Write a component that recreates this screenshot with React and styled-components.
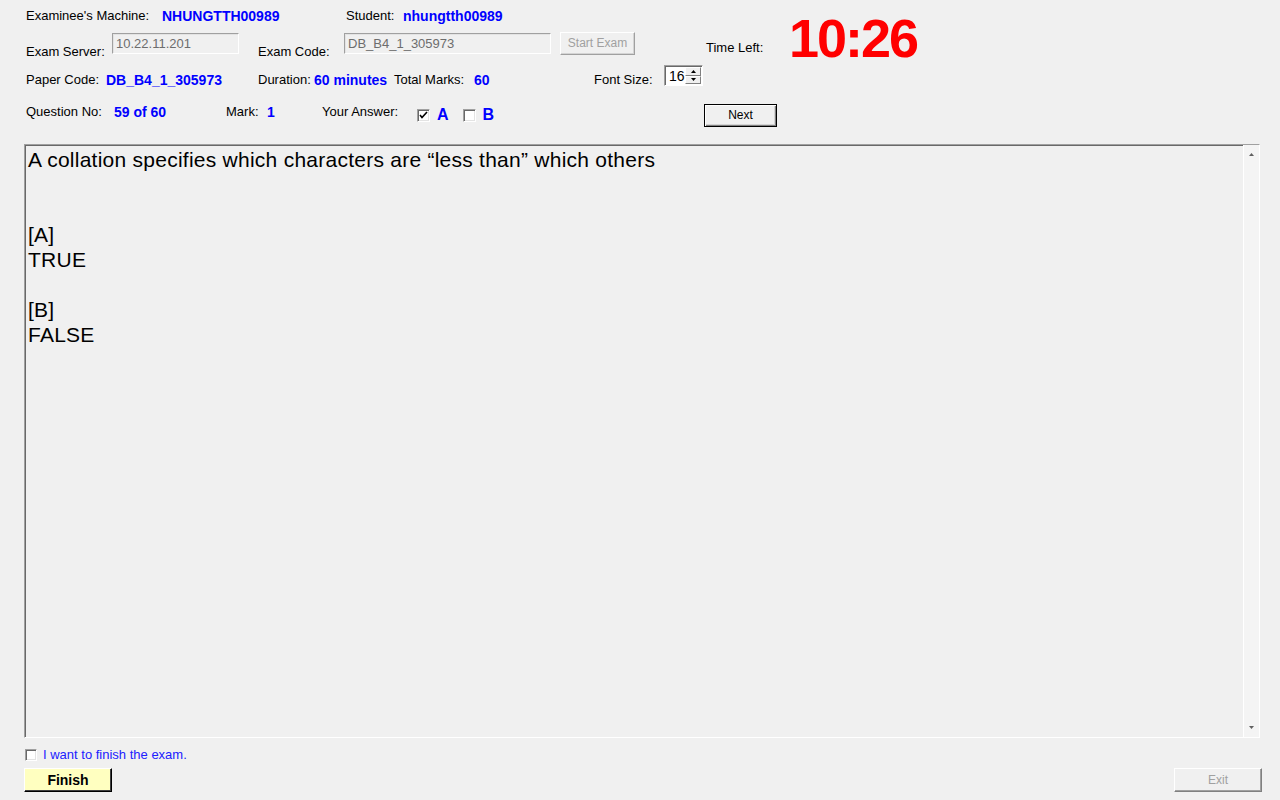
import React from 'react';
import styled, { createGlobalStyle } from 'styled-components';

const GlobalStyle = createGlobalStyle`
  body {
    margin: 0;
    background: #f0f0f0;
    font-family: "Liberation Sans", Arial, sans-serif;
    font-size: 13px;
    color: #000;
  }
`;

const Page = styled.div`
  width: 1280px;
  height: 800px;
  display: flex;
  flex-direction: column;
  background: #f0f0f0;
  overflow: hidden;
`;

const Header = styled.div`
  display: flex;
  padding-left: 26px;
  height: 128px;
`;

const LeftCol = styled.div`
  display: flex;
  flex-direction: column;
  flex: none;
  width: 680px;
`;

const Row = styled.div`
  display: flex;
  align-items: center;
  height: 32px;
`;

const Label = styled.span`
  flex: none;
  width: ${(p) => p.$w}px;
  font-size: 13px;
  line-height: 16px;
  white-space: nowrap;
  margin-top: ${(p) => p.$top || 0}px;
`;

const Value = styled.span`
  flex: none;
  width: ${(p) => (p.$w ? `${p.$w}px` : 'auto')};
  font-size: 14px;
  font-weight: bold;
  color: #0000ff;
  line-height: 16px;
  white-space: nowrap;
`;

const TextBox = styled.div`
  flex: none;
  align-self: flex-start;
  margin-top: 1px;
  margin-right: ${(p) => p.$mr}px;
  width: ${(p) => p.$w}px;
  height: 21px;
  box-sizing: border-box;
  border: 1px solid;
  border-color: #a0a0a0 #fff #fff #a0a0a0;
  box-shadow: inset 1px 1px 0 #e3e3e3;
  padding: 0 3px;
  font-size: 13px;
  line-height: 19px;
  color: #6d6d6d;
  white-space: nowrap;
`;

const DisabledButton = styled.div`
  flex: none;
  align-self: flex-start;
  width: ${(p) => p.$w}px;
  height: 23px;
  box-sizing: border-box;
  border: 1px solid;
  border-color: #fff #a0a0a0 #a0a0a0 #fff;
  box-shadow: inset -1px -1px 0 #d4d4d4;
  font-size: 12px;
  line-height: 21px;
  text-align: center;
  color: #a0a0a0;
`;

const TimeBlock = styled.div`
  display: flex;
  align-items: flex-start;
  height: 64px;
`;

const Timer = styled.div`
  margin-top: 11px;
  font-size: 54px;
  line-height: 54px;
  letter-spacing: -2px;
  font-weight: bold;
  color: #ff0000;
`;

const Spinner = styled.div`
  flex: none;
  align-self: flex-start;
  margin-top: 1px;
  width: 39px;
  height: 21px;
  box-sizing: border-box;
  display: flex;
  background: #fff;
  border: 1px solid;
  border-color: #a0a0a0 #fff #fff #a0a0a0;
  box-shadow: inset 1px 1px 0 #696969;
`;

const SpinValue = styled.span`
  flex: 1;
  padding-left: 4px;
  font-size: 14px;
  line-height: 20px;
`;

const SpinButtons = styled.div`
  display: flex;
  flex-direction: column;
  width: 16px;
  margin: 1px 1px 1px 0;
`;

const SpinButton = styled.div`
  flex: 1;
  display: flex;
  align-items: center;
  justify-content: center;
  background: #f0f0f0;
  border: 1px solid;
  border-color: #fff #808080 #808080 #fff;
`;

const Arrow = ({ down, color = '#000' }) => (
  <svg width="5" height="3" viewBox="0 0 5 3">
    <polygon points={down ? '0,0 5,0 2.5,3' : '2.5,0 5,3 0,3'} fill={color} />
  </svg>
);

const AnswerGroup = styled.div`
  flex: none;
  display: flex;
  align-items: center;
  margin-top: 6px;
  width: 287px;
`;

const CheckBox = styled.div`
  flex: none;
  width: ${(p) => p.$size || 13}px;
  height: ${(p) => p.$size || 13}px;
  box-sizing: border-box;
  background: #fff;
  border: 1px solid;
  border-color: #a0a0a0 #fff #fff #a0a0a0;
  box-shadow: inset 1px 1px 0 #696969, inset -1px -1px 0 #e3e3e3;
  display: flex;
  align-items: center;
  justify-content: center;
`;

const Letter = styled.span`
  font-size: 16px;
  font-weight: bold;
  color: #0000ff;
  margin-left: 7px;
  margin-right: ${(p) => p.$mr || 0}px;
`;

const NextButton = styled.div`
  flex: none;
  width: 73px;
  height: 23px;
  margin-top: 7px;
  box-sizing: border-box;
  border: 1px solid #000;
  box-shadow: inset 1px 1px 0 #fff, inset -1px -1px 0 #808080, inset -2px -2px 0 #d4d4d4;
  font-size: 12px;
  line-height: 21px;
  text-align: center;
`;

const QuestionBox = styled.div`
  display: flex;
  margin: 16px 0 0 24px;
  width: 1236px;
  height: 594px;
  box-sizing: border-box;
  border: 1px solid;
  border-color: #a0a0a0 #fff #fff #a0a0a0;
  box-shadow: inset 1px 1px 0 #696969;
`;

const QuestionText = styled.div`
  flex: 1;
  padding: 2px 0 0 3px;
  font-size: 21px;
  letter-spacing: 0.25px;
  line-height: 25px;
  white-space: pre-line;
`;

const ScrollBar = styled.div`
  width: 16px;
  display: flex;
  flex-direction: column;
  justify-content: space-between;
  align-items: center;
  background: #f4f4f4;
  border-left: 1px solid #fff;
  padding: 8px 0;
  box-sizing: border-box;
`;

const FinishRow = styled.label`
  display: flex;
  align-items: center;
  gap: 6px;
  margin: 10px 0 0 25px;
  height: 13px;
  font-size: 13px;
  color: #2020ff;
`;

const ButtonBar = styled.div`
  display: flex;
  justify-content: space-between;
  padding: 0 18px 0 24px;
  margin-top: 7px;
`;

const ActionButton = styled.div`
  width: ${(p) => p.$w}px;
  height: 24px;
  box-sizing: border-box;
  border: 1px solid;
  border-color: ${(p) => (p.$primary ? '#fff #000 #000 #fff' : '#fff #808080 #808080 #fff')};
  box-shadow: inset -1px -1px 0 ${(p) => (p.$primary ? '#404040' : '#a0a0a0')};
  background: ${(p) => (p.$primary ? '#ffffc0' : '#f0f0f0')};
  color: ${(p) => (p.$primary ? '#000' : '#a0a0a0')};
  font-size: ${(p) => (p.$primary ? 14 : 12)}px;
  font-weight: ${(p) => (p.$primary ? 'bold' : 'normal')};
  line-height: 22px;
  text-align: center;
`;

const Check = () => (
  <svg width="9" height="8" viewBox="0 0 9 8">
    <polyline points="1,4 3,6.5 8,1" fill="none" stroke="#000" strokeWidth="1.6" />
  </svg>
);

const question = `A collation specifies which characters are “less than” which others


[A]
TRUE

[B]
FALSE`;

export default function App() {
  return (
    <Page>
      <GlobalStyle />
      <Header>
        <LeftCol>
          <Row>
            <Label $w={136}>Examinee's Machine:</Label>
            <Value $w={184}>NHUNGTTH00989</Value>
            <Label $w={57}>Student:</Label>
            <Value>nhungtth00989</Value>
          </Row>
          <Row>
            <Label $w={86} $top={8}>Exam Server:</Label>
            <TextBox $w={127} $mr={19}>10.22.11.201</TextBox>
            <Label $w={86} $top={8}>Exam Code:</Label>
            <TextBox $w={207} $mr={9}>DB_B4_1_305973</TextBox>
            <DisabledButton $w={75}>Start Exam</DisabledButton>
          </Row>
          <Row>
            <Label $w={80}>Paper Code:</Label>
            <Value $w={152}>DB_B4_1_305973</Value>
            <Label $w={56}>Duration:</Label>
            <Value $w={80}>60 minutes</Value>
            <Label $w={80}>Total Marks:</Label>
            <Value $w={120}>60</Value>
            <Label $w={70}>Font Size:</Label>
            <Spinner>
              <SpinValue>16</SpinValue>
              <SpinButtons>
                <SpinButton><Arrow /></SpinButton>
                <SpinButton><Arrow down /></SpinButton>
              </SpinButtons>
            </Spinner>
          </Row>
          <Row>
            <Label $w={88}>Question No:</Label>
            <Value $w={112}>59 of 60</Value>
            <Label $w={41}>Mark:</Label>
            <Value $w={55}>1</Value>
            <Label $w={95}>Your Answer:</Label>
            <AnswerGroup>
              <CheckBox><Check /></CheckBox>
              <Letter $mr={14}>A</Letter>
              <CheckBox />
              <Letter>B</Letter>
            </AnswerGroup>
            <NextButton>Next</NextButton>
          </Row>
        </LeftCol>
        <TimeBlock>
          <Label $w={83} $top={40}>Time Left:</Label>
          <Timer>10:26</Timer>
        </TimeBlock>
      </Header>

      <QuestionBox>
        <QuestionText>{question}</QuestionText>
        <ScrollBar>
          <Arrow color="#606060" />
          <Arrow down color="#606060" />
        </ScrollBar>
      </QuestionBox>

      <FinishRow>
        <CheckBox $size={12} />
        I want to finish the exam.
      </FinishRow>
      <ButtonBar>
        <ActionButton $w={88} $primary>Finish</ActionButton>
        <ActionButton $w={88}>Exit</ActionButton>
      </ButtonBar>
    </Page>
  );
}
